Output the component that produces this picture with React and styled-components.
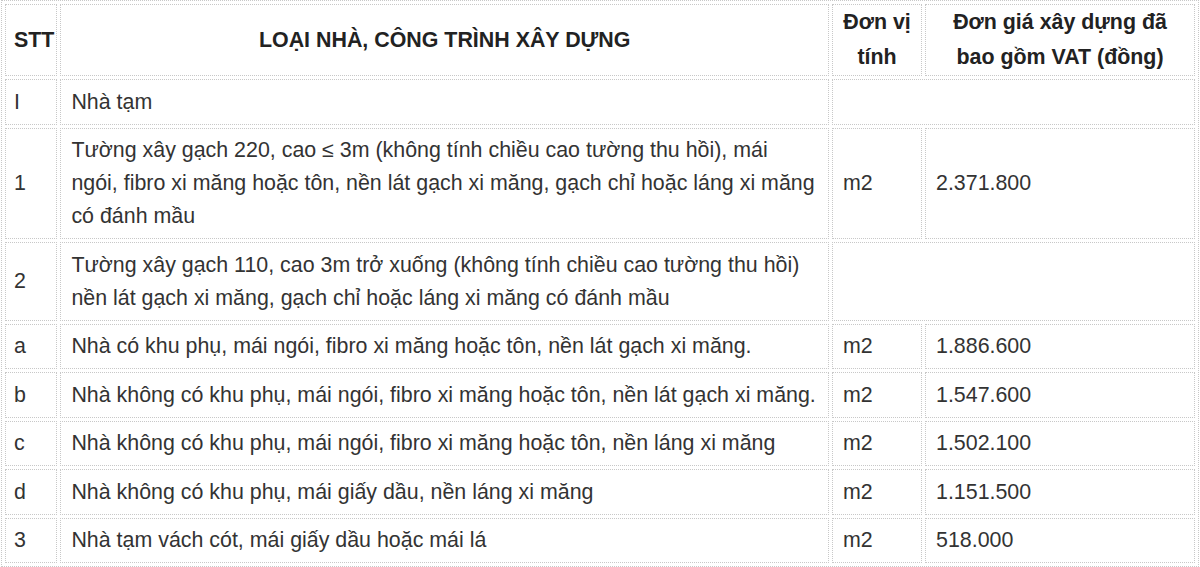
import styled, { createGlobalStyle } from "styled-components";

const GlobalStyle = createGlobalStyle`
  body {
    margin: 0;
    background: #fff;
    font-family: "Liberation Sans", Arial, sans-serif;
  }
`;

const Page = styled.div`
  padding: 0 1px;
`;

const Table = styled.table`
  width: 100%;
  border: 1px dotted #c8c8c8;
  border-collapse: separate;
  border-spacing: 3px;
  color: #333;
  font-size: 21.4px;
  line-height: 33px;
`;

const HeadCell = styled.th`
  border: 1px dotted #c8c8c8;
  padding: 0 ${(p) => p.$px || "10px"};
  font-weight: 700;
  text-align: center;
  line-height: 35px;
  color: #222;
  width: ${(p) => p.$w || "auto"};
`;

const Cell = styled.td`
  border: 1px dotted #c8c8c8;
  padding: 5.5px 10px 5px;
  vertical-align: middle;
  text-align: left;
`;

const NoCell = styled(Cell)`
  padding-left: 8px;
  padding-right: 2px;
`;

const NameCell = styled(Cell)`
  padding-right: 10.5px;
`;

const rows = [
  { no: "I", name: "Nhà tạm", group: true },
  {
    no: "1",
    name: "Tường xây gạch 220, cao ≤ 3m (không tính chiều cao tường thu hồi), mái ngói, fibro xi măng hoặc tôn, nền lát gạch xi măng, gạch chỉ hoặc láng xi măng có đánh mầu",
    unit: "m2",
    price: "2.371.800",
  },
  {
    no: "2",
    name: "Tường xây gạch 110, cao 3m trở xuống (không tính chiều cao tường thu hồi) nền lát gạch xi măng, gạch chỉ hoặc láng xi măng có đánh mầu",
    group: true,
  },
  { no: "a", name: "Nhà có khu phụ, mái ngói, fibro xi măng hoặc tôn, nền lát gạch xi măng.", unit: "m2", price: "1.886.600" },
  { no: "b", name: "Nhà không có khu phụ, mái ngói, fibro xi măng hoặc tôn, nền lát gạch xi măng.", unit: "m2", price: "1.547.600" },
  { no: "c", name: "Nhà không có khu phụ, mái ngói, fibro xi măng hoặc tôn, nền láng xi măng", unit: "m2", price: "1.502.100" },
  { no: "d", name: "Nhà không có khu phụ, mái giấy dầu, nền láng xi măng", unit: "m2", price: "1.151.500" },
  { no: "3", name: "Nhà tạm vách cót, mái giấy dầu hoặc mái lá", unit: "m2", price: "518.000" },
];

export default function App() {
  return (
    <Page>
      <GlobalStyle />
      <Table>
        <thead>
          <tr>
            <HeadCell $w="40px" $px="2px 0 8px">STT</HeadCell>
            <HeadCell>LOẠI NHÀ, CÔNG TRÌNH XÂY DỰNG</HeadCell>
            <HeadCell $w="68px">Đơn vị tính</HeadCell>
            <HeadCell $w="248px">Đơn giá xây dựng đã bao gồm VAT (đồng)</HeadCell>
          </tr>
        </thead>
        <tbody>
          {rows.map((r) => (
            <tr key={r.no}>
              <NoCell>{r.no}</NoCell>
              <NameCell>{r.name}</NameCell>
              {r.group ? (
                <Cell colSpan={2} />
              ) : (
                <>
                  <Cell>{r.unit}</Cell>
                  <Cell>{r.price}</Cell>
                </>
              )}
            </tr>
          ))}
        </tbody>
      </Table>
    </Page>
  );
}
